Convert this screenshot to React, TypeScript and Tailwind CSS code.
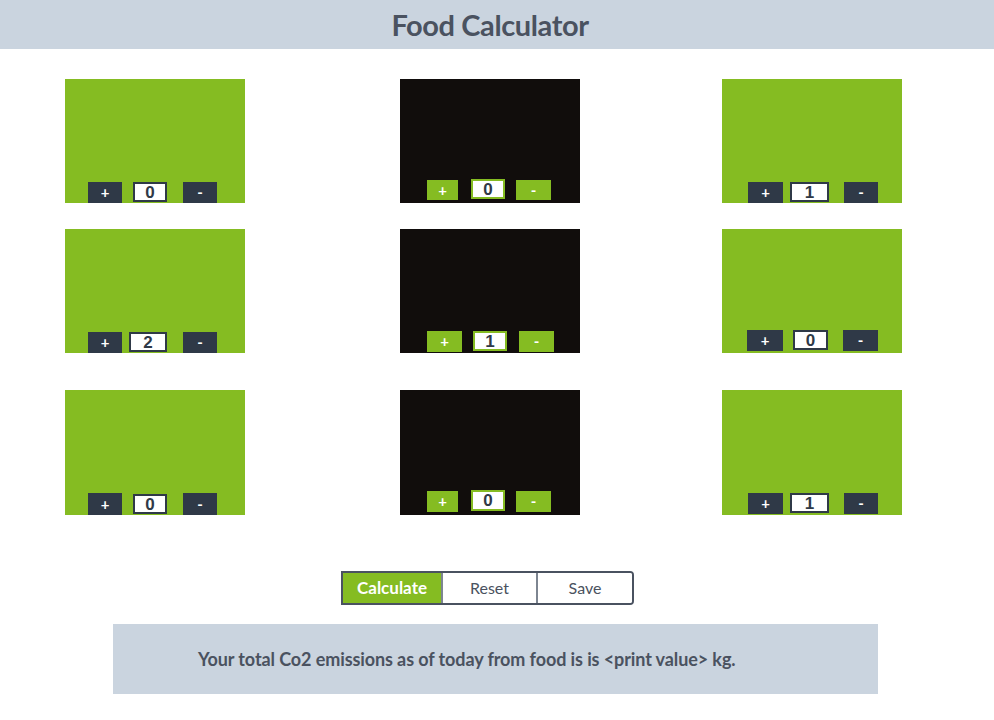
import { useState } from 'react';

type cardType = {
  dark: boolean;
  value: number;
  // layout tweaks for each card, written out in full
  pad: string;
  plus: string;
  input: string;
  minus: string;
};

const rows: { top: string; height: string; cards: cardType[] }[] = [
  {
    top: 'mt-[30px]',
    height: 'h-[124px]',
    cards: [
      { dark: false, value: 0, pad: 'pl-[23px] pb-0', plus: 'w-[34px] h-[21px]', input: 'ml-[11px] w-[34px] h-[20px]', minus: 'ml-[16px] w-[34px] h-[21px]' },
      { dark: true, value: 0, pad: 'pl-[27px] pb-[3px]', plus: 'w-[31px] h-[20px]', input: 'ml-[13px] w-[34px] h-[20px]', minus: 'ml-[11px] w-[35px] h-[20px]' },
      { dark: false, value: 1, pad: 'pl-[26px] pb-0', plus: 'w-[35px] h-[21px]', input: 'ml-[7px] w-[39px] h-[20px]', minus: 'ml-[15px] w-[34px] h-[21px]' },
    ],
  },
  {
    top: 'mt-[26px]',
    height: 'h-[124px]',
    cards: [
      { dark: false, value: 2, pad: 'pl-[23px] pb-0', plus: 'w-[34px] h-[21px]', input: 'ml-[7px] w-[38px] h-[20px]', minus: 'ml-[16px] w-[34px] h-[21px]' },
      { dark: true, value: 1, pad: 'pl-[27px] pb-[1px]', plus: 'w-[35px] h-[21px]', input: 'ml-[11px] w-[34px] h-[20px]', minus: 'ml-[12px] w-[35px] h-[21px]' },
      { dark: false, value: 0, pad: 'pl-[25px] pb-[2px]', plus: 'w-[36px] h-[21px]', input: 'ml-[10px] w-[35px] h-[20px]', minus: 'ml-[15px] w-[35px] h-[21px]' },
    ],
  },
  {
    top: 'mt-[37px]',
    height: 'h-[125px]',
    cards: [
      { dark: false, value: 0, pad: 'pl-[23px] pb-0', plus: 'w-[34px] h-[22px]', input: 'ml-[11px] w-[34px] h-[20px]', minus: 'ml-[16px] w-[34px] h-[22px]' },
      { dark: true, value: 0, pad: 'pl-[27px] pb-[3px]', plus: 'w-[31px] h-[21px]', input: 'ml-[13px] w-[34px] h-[21px]', minus: 'ml-[11px] w-[35px] h-[21px]' },
      { dark: false, value: 1, pad: 'pl-[26px] pb-[1px]', plus: 'w-[35px] h-[21px]', input: 'ml-[7px] w-[39px] h-[20px]', minus: 'ml-[15px] w-[34px] h-[21px]' },
    ],
  },
];

const colGap = ['', 'ml-[155px]', 'ml-[142px]'];

function FoodCard({ card, height, gap }: { card: cardType; height: string; gap: string }) {
  const [count, setCount] = useState(card.value);
  const btn = card.dark ? 'bg-[#85bc22]' : 'bg-[#2f3947]';
  return (
    <div
      className={`${gap} ${height} w-[180px] flex items-end ${card.pad} ${card.dark ? 'bg-[#110d0c]' : 'bg-[#85bc22]'}`}
    >
      <button
        onClick={() => setCount(count + 1)}
        className={`${card.plus} ${btn} text-white text-[15px] font-bold flex items-center justify-center leading-none`}
      >
        +
      </button>
      <div
        className={`${card.input} mb-[1px] bg-white border-2 ${card.dark ? 'border-[#85bc22]' : 'border-[#2f3947]'} text-[#2f3947] text-[17px] font-bold font-['Liberation_Sans',sans-serif] flex items-center justify-center leading-none`}
      >
        {count}
      </div>
      <button
        onClick={() => setCount(count > 0 ? count - 1 : 0)}
        className={`${card.minus} ${btn} text-white text-[15px] font-bold flex items-center justify-center leading-none`}
      >
        -
      </button>
    </div>
  );
}

export default function App() {
  return (
    <div className="w-[994px] min-h-[720px] bg-white font-['Lato','Liberation_Sans',sans-serif]">
      <div className="h-[49px] bg-[#cad4df] flex items-center justify-center">
        <h1 className="text-[29px] font-bold text-[#4a5260] tracking-[-0.4px] ml-[-14px]">Food Calculator</h1>
      </div>

      {rows.map((row, r) => (
        <div key={r} className={`${row.top} flex pl-[65px]`}>
          {row.cards.map((card, c) => (
            <FoodCard key={c} card={card} height={row.height} gap={colGap[c]} />
          ))}
        </div>
      ))}

      <div className="mt-[56px] flex justify-center">
        <div className="ml-[-19px] flex h-[34px] border-2 border-[#4a5260] rounded-r-[4px] overflow-hidden">
          <button className="w-[98px] bg-[#85bc22] text-white text-[17px] font-bold">Calculate</button>
          <button className="w-[95px] bg-white text-[#4a5260] text-[16px] border-l-2 border-[#7d8591]">Reset</button>
          <button className="w-[96px] bg-white text-[#4a5260] text-[16px] border-l-2 border-[#7d8591]">Save</button>
        </div>
      </div>

      <div className="mt-[19px] ml-[113px] w-[765px] h-[70px] bg-[#cad4df] flex items-center pl-[85px]">
        <p className="text-[18px] font-bold text-[#4a5260] tracking-[-0.1px]">
          Your total Co2 emissions as of today from food is is &lt;print value&gt; kg.
        </p>
      </div>
    </div>
  );
}
